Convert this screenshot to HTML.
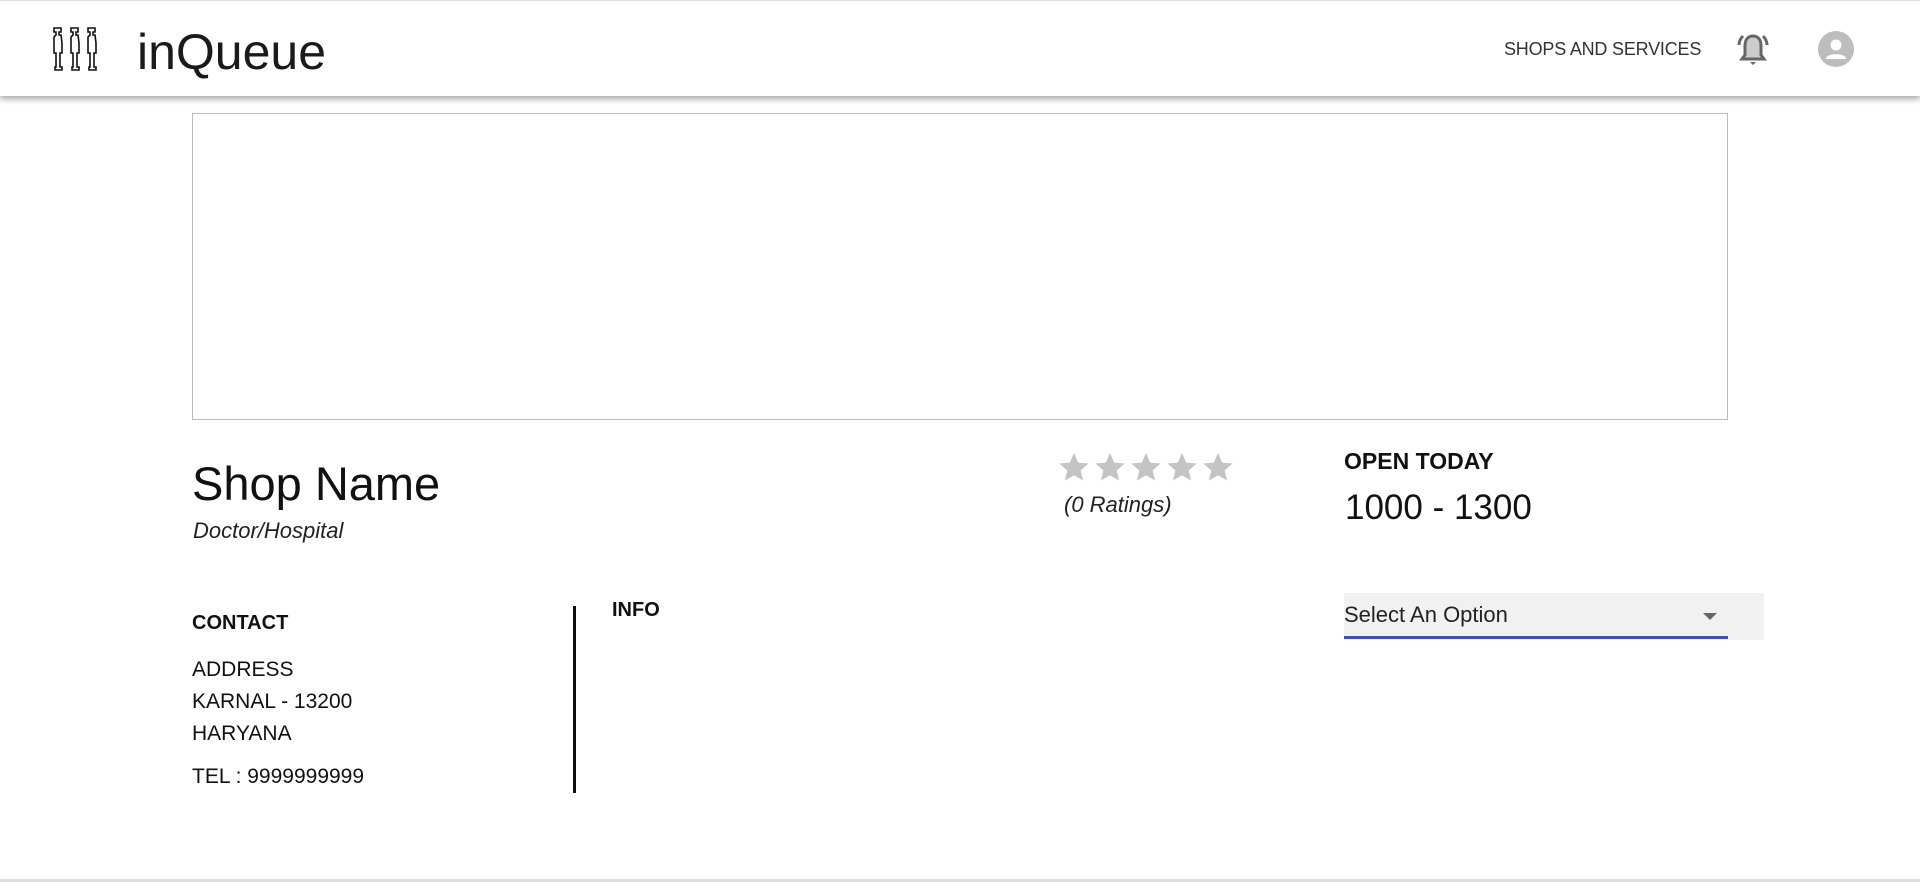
<!DOCTYPE html>
<html><head><meta charset="utf-8"><style>
*{margin:0;padding:0;box-sizing:border-box}
body{width:1920px;height:882px;background:#fff;font-family:"Liberation Sans",sans-serif;color:#111;position:relative;overflow:hidden}
.t{position:absolute;line-height:1;white-space:nowrap}
.hdr{position:absolute;left:0;top:0;width:1920px;height:96px;background:#fff;border-top:1px solid #ddd;box-shadow:0 3px 6px rgba(0,0,0,.35)}
</style></head><body>
<div class="hdr"></div>
<svg style="position:absolute;left:50px;top:25px" width="52" height="48" viewBox="0 0 52 48" fill="none" stroke="#111" stroke-width="1.6">
<g id="p"><path d="M4 3h7v4h-2v3h2l1 8v10h-2v14h2v3H5v-3h1V28H4V12l2-2V7H4z"/></g>
<use href="#p" x="17"/><use href="#p" x="34"/>
</svg>
<div class="t" style="left:137px;top:27px;font-size:50px;color:#1a1a1a">inQueue</div>
<div class="t" style="left:1504px;top:40px;font-size:18px;color:#333;letter-spacing:-0.2px">SHOPS AND SERVICES</div>
<svg style="position:absolute;left:1736px;top:32px" width="34" height="36" viewBox="0 0 34 36">
<path d="M17 4c-6 0-8 5-8 10v9l-3 4h22l-3-4v-9c0-5-2-10-8-10z" fill="#ccc" stroke="#666" stroke-width="3"/>
<path d="M14 30h6l-3 3z" fill="#666"/>
<path d="M7 4C4 7 3 10 3 13M27 4c3 3 4 6 4 9" stroke="#666" stroke-width="3" fill="none"/>
</svg>
<svg style="position:absolute;left:1818px;top:31px" width="36" height="36" viewBox="0 0 36 36">
<circle cx="18" cy="18" r="18" fill="#bdbdbd"/><circle cx="18" cy="14" r="5.5" fill="#fff"/><path d="M8 27c2-5 18-5 20 0v1H8z" fill="#fff"/>
</svg>
<div style="position:absolute;left:192px;top:113px;width:1536px;height:307px;border:1px solid #bbb"></div>
<div class="t" style="left:192px;top:460px;font-size:47px;color:#111">Shop Name</div>
<div class="t" style="left:193px;top:520px;font-size:22px;font-style:italic;color:#222">Doctor/Hospital</div>
<svg style="position:absolute;left:1059px;top:452px" width="176" height="32" viewBox="0 0 176 32" fill="#c4c4c4">
<g id="s"><path d="M15 1l4.2 9.6 10.4.9-7.9 6.9 2.4 10.2L15 23.2 5.9 28.6l2.4-10.2L.4 11.5l10.4-.9z"/></g>
<use href="#s" x="36"/><use href="#s" x="72"/><use href="#s" x="108"/><use href="#s" x="144"/>
</svg>
<div class="t" style="left:1064px;top:494px;font-size:22px;font-style:italic;color:#222">(0 Ratings)</div>
<div class="t" style="left:1344px;top:450px;font-size:23px;font-weight:bold;color:#111">OPEN TODAY</div>
<div class="t" style="left:1345px;top:490px;font-size:35px;color:#111">1000 - 1300</div>
<div class="t" style="left:192px;top:613px;font-size:20px;font-weight:bold">CONTACT</div>
<div class="t" style="left:612px;top:600px;font-size:20px;font-weight:bold">INFO</div>
<div style="position:absolute;left:573px;top:606px;width:3px;height:187px;background:#111"></div>
<div class="t" style="left:192px;top:659px;font-size:21px">ADDRESS</div>
<div class="t" style="left:192px;top:691px;font-size:21px">KARNAL - 13200</div>
<div class="t" style="left:192px;top:723px;font-size:21px">HARYANA</div>
<div class="t" style="left:192px;top:766px;font-size:21px">TEL : 9999999999</div>
<div style="position:absolute;left:1344px;top:593px;width:420px;height:47px;background:#f1f1f1"></div>
<div style="position:absolute;left:1344px;top:636px;width:384px;height:3px;background:#3f51b5"></div>
<div class="t" style="left:1344px;top:604px;font-size:22px;color:#222">Select An Option</div>
<div style="position:absolute;left:1703px;top:613px;width:0;height:0;border-left:7px solid transparent;border-right:7px solid transparent;border-top:7px solid #666"></div>
<div style="position:absolute;left:0;top:879px;width:1920px;height:3px;background:#ddd"></div>
</body></html>
